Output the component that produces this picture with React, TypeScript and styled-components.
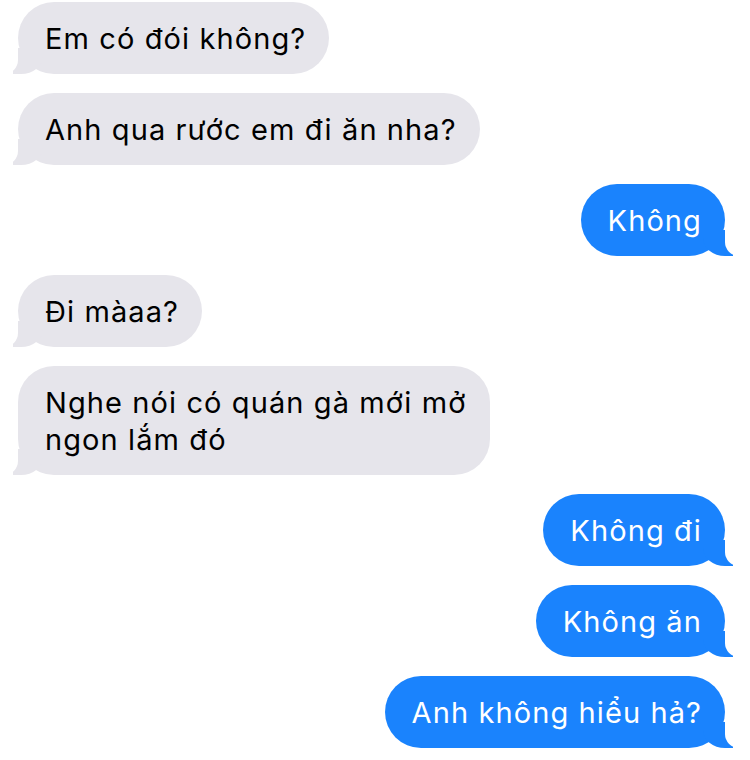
import React from 'react'
import styled, { createGlobalStyle } from 'styled-components'

const GlobalStyle = createGlobalStyle`
  html, body {
    margin: 0;
    padding: 0;
    background: #ffffff;
  }
  body {
    font-family: Inter, "Liberation Sans", Arial, sans-serif;
    -webkit-font-smoothing: antialiased;
  }
`

const colors = {
  gray: '#e6e5eb',
  blue: '#1a83fd',
  white: '#ffffff',
  black: '#000000',
}

const StyledThread = styled.div`
  display: flex;
  flex-direction: column;
  gap: 19px;
  padding: 2px 25px 12px 18px;
  overflow: hidden;
  width: 750px;
  box-sizing: border-box;
`

// the tail is two overlapping corners: a coloured hook and a white cut-out
const StyledBubble = styled.div<{ mine?: boolean }>`
  position: relative;
  align-self: ${({ mine }) => (mine ? 'flex-end' : 'flex-start')};
  background-color: ${({ mine }) => (mine ? colors.blue : colors.gray)};
  color: ${({ mine }) => (mine ? colors.white : colors.black)};
  font-size: 29px;
  line-height: 37px;
  letter-spacing: 1.1px;
  padding: 17.5px 23px 17.5px 27px;
  border-radius: 36px;
  white-space: pre-line;

  &::before {
    content: '';
    position: absolute;
    bottom: 0;
    ${({ mine }) => (mine ? 'right: -8px;' : 'left: -5px;')}
    width: 30px;
    height: 26px;
    background-color: ${({ mine }) => (mine ? colors.blue : colors.gray)};
    ${({ mine }) =>
      mine ? 'border-bottom-left-radius: 22px 18px;' : 'border-bottom-right-radius: 22px 18px;'}
  }

  &::after {
    content: '';
    position: absolute;
    bottom: 0;
    ${({ mine }) => (mine ? 'right: -34px;' : 'left: -34px;')}
    width: 34px;
    height: 27px;
    background-color: ${colors.white};
    ${({ mine }) =>
      mine ? 'border-bottom-left-radius: 14px;' : 'border-bottom-right-radius: 14px;'}
  }
`

type Message = {
  text: string
  mine?: boolean
}

const MESSAGES: Message[] = [
  { text: 'Em có đói không?' },
  { text: 'Anh qua rước em đi ăn nha?' },
  { text: 'Không', mine: true },
  { text: 'Đi màaa?' },
  { text: 'Nghe nói có quán gà mới mở\nngon lắm đó' },
  { text: 'Không đi', mine: true },
  { text: 'Không ăn', mine: true },
  { text: 'Anh không hiểu hả?', mine: true },
]

const App: React.FC = () => (
  <>
    <GlobalStyle />
    <StyledThread>
      {MESSAGES.map((message, i) => (
        <StyledBubble key={i} mine={message.mine}>
          {message.text}
        </StyledBubble>
      ))}
    </StyledThread>
  </>
)

export default App
